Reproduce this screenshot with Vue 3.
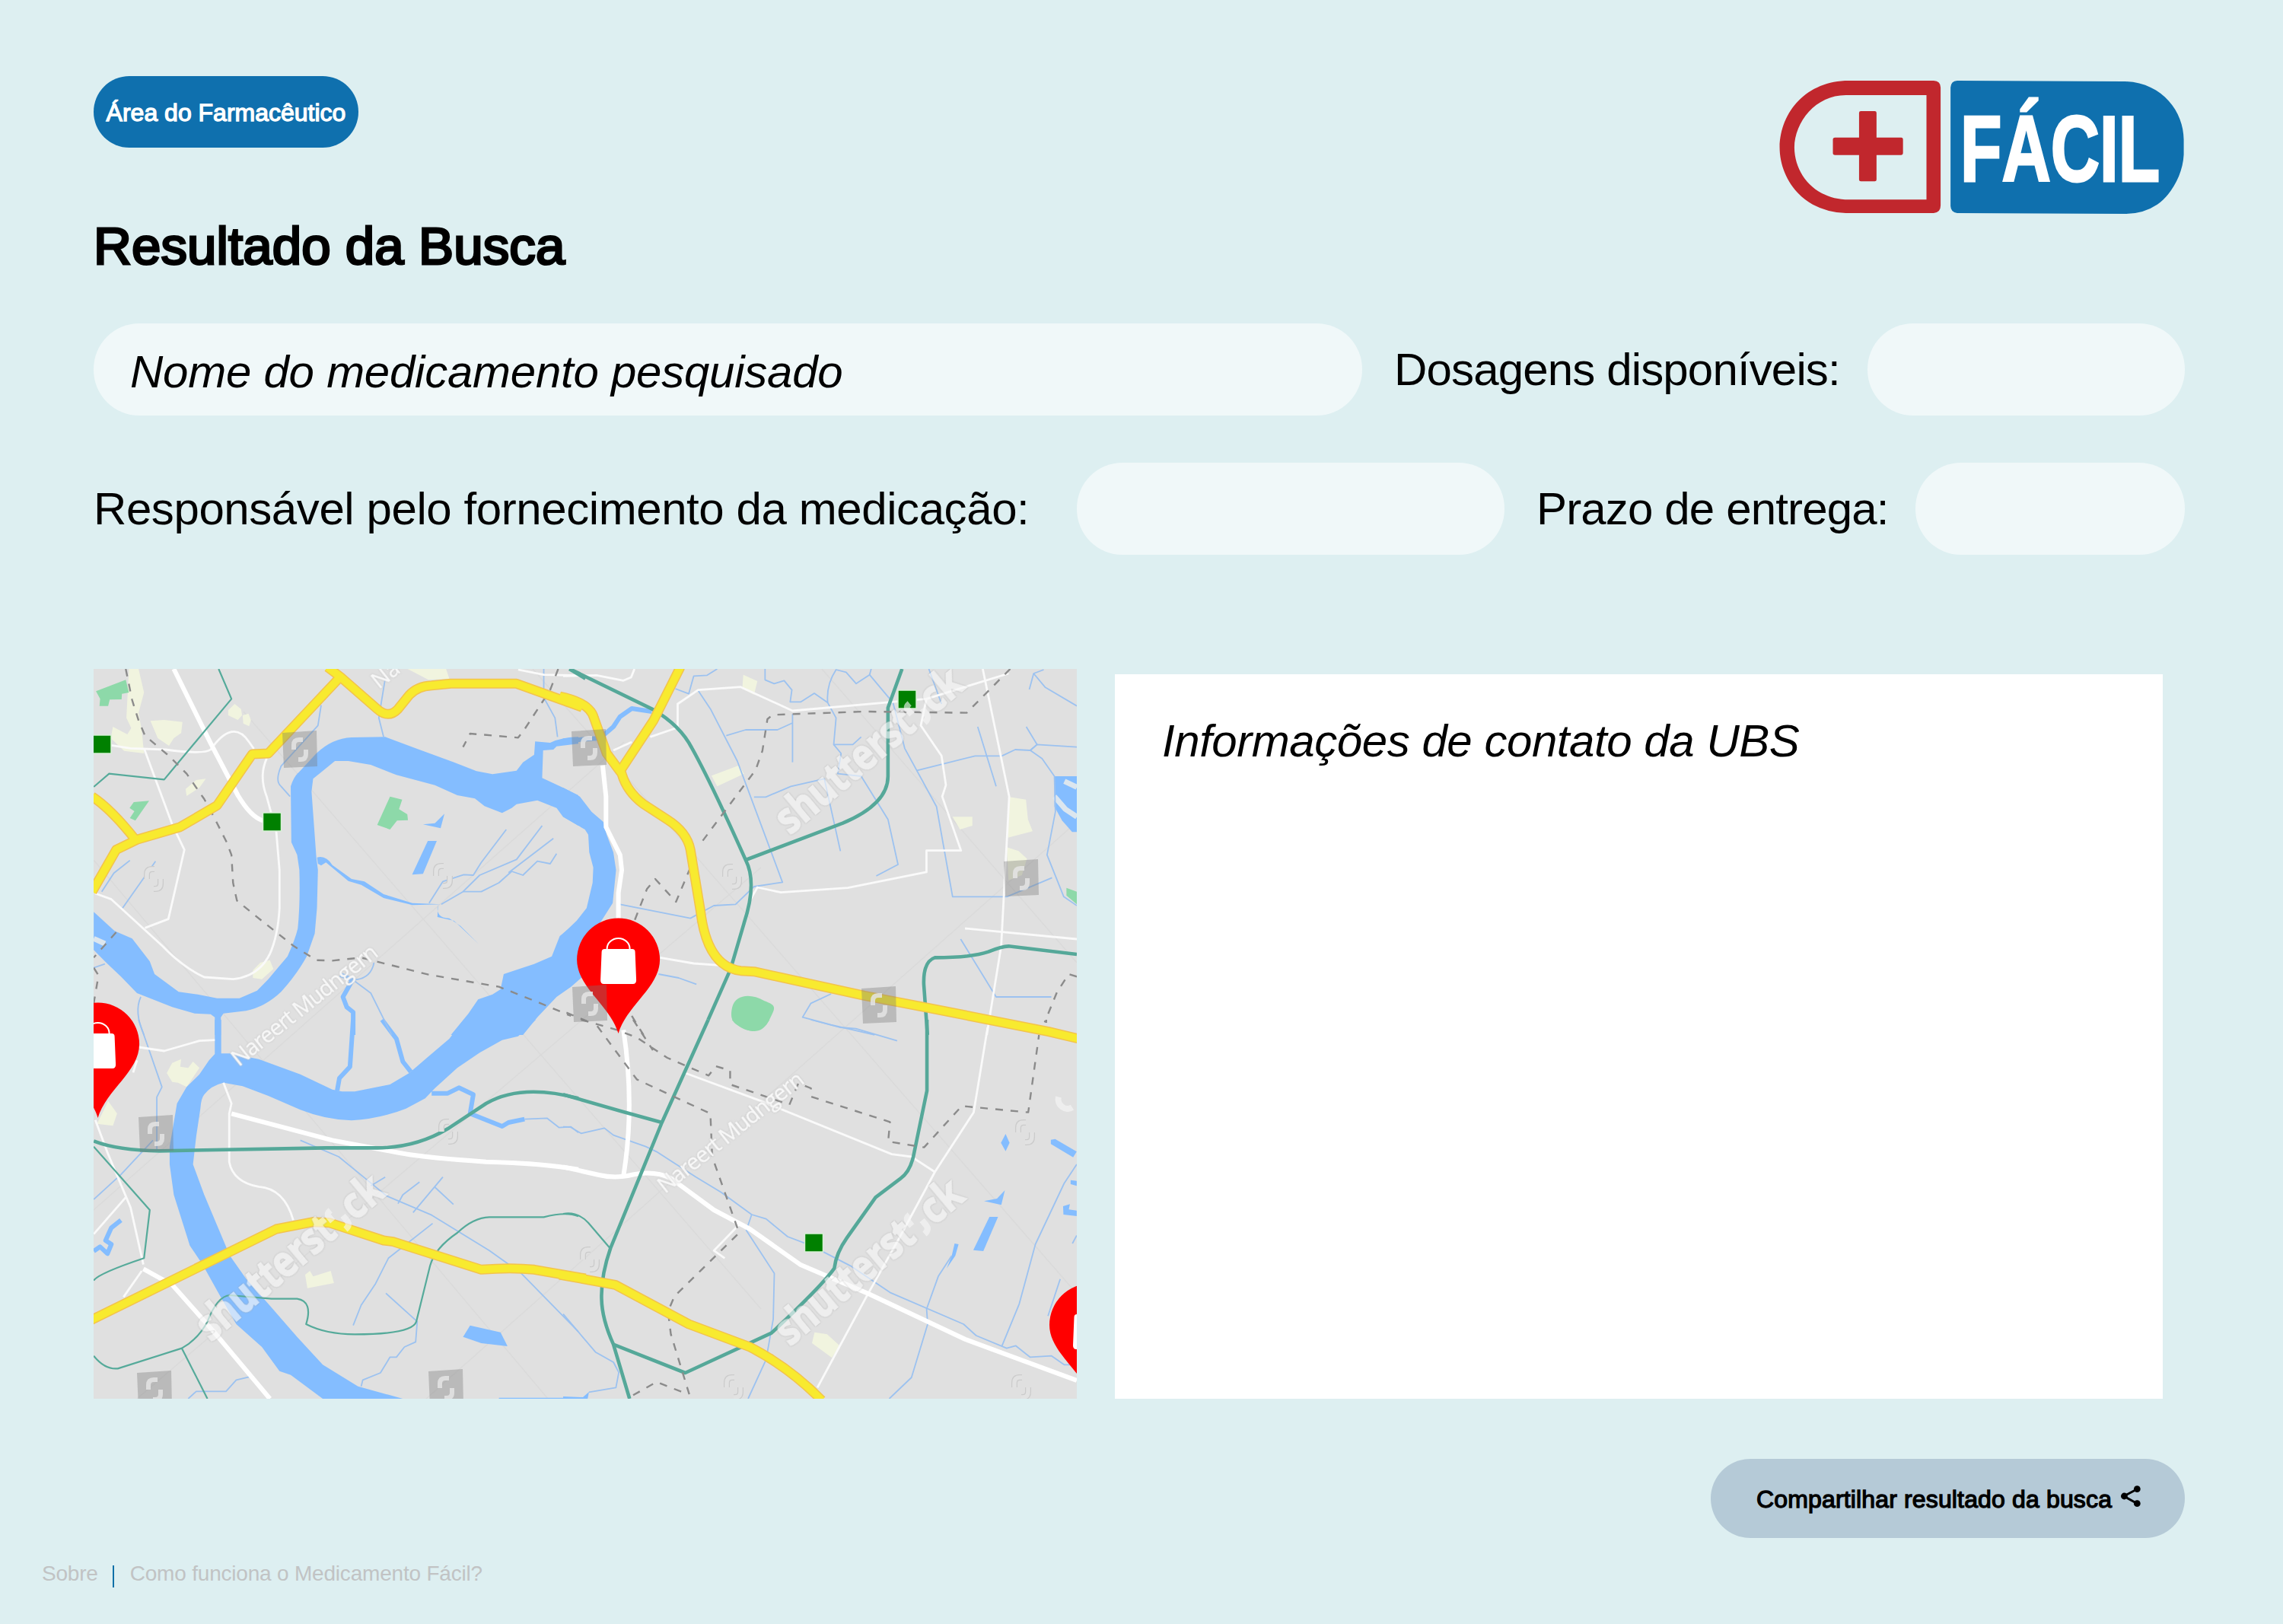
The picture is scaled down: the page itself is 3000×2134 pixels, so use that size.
<script setup>
// The map is drawn in four tiles, each with its own coordinate grid.
const tiles = {
  nw: 'translate(100 860) scale(.42092 .33333)',
  ne: 'translate(740 860) scale(.44005 .33333)',
  sw: 'translate(100 1340) scale(.42092 .33333)',
  se: 'translate(740 1340) scale(.47194 .33333)',
}

// Layers are painted in this order, from the ground up.
const layers = [
  {
    kind: 'sand',
    nw: [
      'M165 57H195L212 150L195 230L205 300L212 390L150 380L108 330L115 285L160 315L172 290L157 250Z',
      'M232 262L275 258L332 266L328 310L305 330L290 360L255 330Z',
      'M475 220L495 195L515 215L518 240L505 258L475 240Z', 'M520 240L538 233L546 258L540 283L522 272Z',
      'M1035 57H1155L1165 95L1100 100Z', 'M342 530L375 495L405 490L385 525L345 558Z',
      'M575 1215L605 1205L616 1240L580 1280L552 1275L552 1245Z',
    ],
    ne: [
      'M538 80L580 105L570 158L535 135Z', 'M443 478L525 437L540 470L460 520Z',
      'M1333 562L1382 572L1388 650L1402 697L1328 722Z', 'M1325 760L1360 775L1385 805L1370 870L1330 890Z',
      'M1163 640H1222V675L1185 690Z',
    ],
    sw: [
      'M283 210L300 170L328 155L325 185L350 190L365 165L385 190L345 265L318 248L300 245Z',
      'M100 320L128 370L115 418L65 410L85 360Z', 'M715 1005L730 990L740 1012L795 990L805 1038L722 1058Z',
    ],
    se: ['M700 1232L735 1240L770 1285L748 1332L693 1275Z'],
  },
  {
    kind: 'park',
    nw: [
      'M62 145L155 100L165 150L143 155L142 177L105 178L100 203H73L75 175Z',
      'M167 605L180 582L228 577L185 655L168 645L182 618Z',
      'M980 560L1018 572L1008 610L1034 630L1036 653L1002 655L980 690L940 672Z',
    ],
    ne: [
      'M505 1390C515 1340 560 1335 600 1365C640 1385 635 1390 612 1450C590 1500 555 1490 520 1460C500 1445 500 1420 505 1390Z',
      'M1503 920L1534 935V985L1503 950Z',
    ],
    se: ['M470 0C500 50 545 65 575 0Z'],
  },
  {
    kind: 'water',
    nw: [
      'M55 1015L120 1090L175 1120L230 1210L245 1260L320 1330L380 1340L440 1355L510 1355L565 1325L600 1280L660 1190Q685 1120 692 1080Q700 980 697 850L690 790L672 740L670 520Q680 480 695 465L750 390Q800 330 860 327L965 325L1060 370L1180 425L1250 460L1300 472L1375 458L1395 425L1430 395L1433 343L1480 348Q1520 325 1568 325V352L1500 362L1490 375L1458 378L1455 487L1520 525L1568 555V675L1520 640L1500 605L1440 575L1375 590L1360 605L1330 625L1275 598L1245 568L1190 555L1120 515L1000 475L920 435L850 420L808 420L740 490L735 540L750 800L755 850L752 1000L745 1100L720 1190Q690 1260 640 1330Q590 1390 530 1405L460 1415L452 1430V1500H433V1430L420 1418L370 1415L300 1390L190 1335L140 1270L90 1210L55 1165Z',
      'M1568 1050L1510 1110L1485 1190L1430 1220L1335 1260L1325 1320L1300 1340L1255 1360L1225 1415L1170 1500H1395L1440 1430L1500 1350L1545 1310L1600 1250V1050Z',
      'M1083 670L1120 665L1150 628L1138 685Z', 'M1098 735H1126L1083 865L1049 868Z',
      'M1130 985Q1120 1040 1165 1040L1200 1070L1258 1143L1180 1050L1128 1035Z',
      'M752 800Q780 790 800 830L860 885L900 895L960 945L1050 980L1140 985L1050 988L960 960L890 908L850 893L780 820L765 832L755 825Z',
    ],
    ne: [
      'M0 525L50 560L85 620L120 660L130 710L150 780L158 850L148 980L100 1080L70 1160L40 1290L0 1330V1100L40 1050L70 1000L88 900L90 840L78 780L75 710L65 690L0 640Z',
      'M1467 480H1534V700H1520L1490 655L1467 600Z',
    ],
    sw: [
      'M433 0V135L415 160L385 215L345 265L315 330L303 420L292 500V570L305 690L345 850L355 890L395 965L450 1090L500 1200L580 1290L635 1385L670 1400L770 1494H1020L880 1445L770 1360L690 1250L600 1120L530 1020L480 930L440 810L400 690L365 570L375 460L388 350Q390 310 400 295Q420 260 460 248L520 262L600 300L700 355Q780 395 860 397Q950 390 1030 350L1090 310L1120 270L1190 190L1260 130L1330 80L1380 65L1435 0H1210L1165 75L1100 145L1040 210L980 255L870 283L830 283L800 275L700 215L570 155L480 133H453V0Z',
      'M1230 1205L1325 1232L1347 1287L1265 1275L1208 1250Z', 'M1320 1490H1568V1496H1320Z',
    ],
    se: [
      'M1232 450L1243 485L1232 518L1219 485Z', 'M1370 470L1430 520L1420 542L1358 490V473Z',
      'M1172 715L1208 705L1230 672L1220 730Z', 'M1187 777H1211L1170 912L1142 908Z',
      'M1090 882L1101 885L1092 930L1068 980L1082 930Z', 'M1413 632L1430 635V655L1413 648Z',
      'M1392 735L1411 727L1408 748L1430 752V774L1393 768Z', 'M0 1485L55 1488L72 1467L68 1496H0Z',
    ],
  },
  { kind: 'glint', ne: ['M1497 500L1534 523', 'M1467 560L1500 610L1534 640'], nw: ['M55 1120L90 1140'] },
  {
    kind: 'canal',
    nw: ['M865 1500V1410L845 1390L833 1350L863 1283L825 1262'],
    ne: ['M0 340L110 330L150 285L170 245L205 213L265 225'],
    sw: ['M865 0L855 185L822 230L815 280', 'M955 0L1000 75L1020 165L1045 205', 'M1110 290L1160 290L1195 268L1240 295L1230 370L1330 420L1350 405L1400 392', 'M140 790L110 820L92 870L110 885L98 922L75 895L55 912'],
  },
  {
    kind: 'stream',
    nw: [
      'M965 95L945 250L960 325', 'M765 200L755 280L640 440Q620 500 640 520L668 560', 'M1460 57V170L1495 250L1503 325',
      'M168 812L118 862L80 935', 'M248 815L145 1000', 'M1343 690L1265 820L1240 870L1210 868L1145 895L1102 980',
      'M1455 675L1375 808L1260 870L1208 935', 'M1490 725L1350 860', 'M1500 785L1480 825L1440 815L1395 870L1360 855L1320 900L1265 935H1208L1140 985',
      'M930 1215Q920 1280 865 1283L920 1335L985 1500', 'M55 1235L90 1220', 'M202 1350Q180 1410 212 1500',
    ],
    ne: [
      'M335 135L375 155L390 85L430 82L460 57', 'M403 142L440 215L520 420L655 898L570 915L515 985L450 990L380 1040L170 985',
      'M487 320L545 297H640L685 270', 'M685 235V425', 'M603 57V100L630 115L660 103L683 140L678 187H710L750 153L790 190L815 250L808 355H865L890 325',
      'M790 190Q785 120 815 60L845 70L875 115L915 80L920 57', 'M915 80L985 190L1020 370L1115 600L1163 955H1325L1460 880',
      'M808 355L830 390L820 470L890 480L970 650L1000 828L935 873', 'M570 562H605L680 520L780 490L828 775', 'M1092 57L1130 195',
      'M1055 458L1230 400H1310L1350 375L1395 378L1415 355L1534 365', 'M1383 285L1415 355L1395 378L1430 410L1467 480L1470 620L1445 790L1495 955L1534 990',
      'M1238 285L1293 520', 'M1435 60L1405 75L1392 138', 'M1405 75L1440 130L1534 203', 'M1187 1122L1293 1350H1458',
      'M800 1338L740 1375L715 1430L800 1460L930 1500', 'M285 1260L345 1275L398 1300',
    ],
    sw: [
      'M195 0L268 265L252 305V520', 'M240 475L140 610L55 708', 'M700 475L820 540L970 695L1110 770L1290 910L1390 1000L1568 1230',
      'M1145 620L1052 760', 'M1120 660L1178 728', 'M1072 640L1020 690L1005 725', 'M965 620L920 655', 'M1113 803L975 940L935 1040L890 1125L865 1205',
      'M967 1078L1065 1190L1060 1270L1025 1290L1000 1330H980L950 1392L895 1420L890 1445', 'M350 1494L375 1465H468L500 1420L540 1408',
      'M1400 392L1470 388L1508 425L1545 422L1568 445',
    ],
    se: [
      'M690 0L770 30L815 35L930 83', 'M0 422L20 423L50 448L115 427L140 455L230 500L260 520L370 620L440 680L525 768L565 785L625 855L690 890L800 970L910 1075L1115 1200L1150 1245L1235 1295L1260 1285L1300 1330L1360 1325L1395 1360H1430',
      'M525 768L510 830L588 1000L585 1180L565 1340L515 1494', 'M1082 930L1045 1010L1012 1140L1015 1200L970 1410L908 1494',
      'M1430 570L1395 645L1315 885L1270 1120L1222 1285', 'M1384 1022L1350 1168', 'M1430 850L1418 882', 'M0 1160L90 1310L140 1350L155 1390L147 1450L72 1468',
    ],
  },
  {
    kind: 'lane',
    nw: [
      'M110 358L170 370L280 375Q400 395 420 375Q490 250 540 345L555 372', 'M212 370L300 670L338 770L288 1043L215 1078',
      'M595 410Q570 480 595 560L625 700L635 850V1000Q630 1110 605 1180Q570 1270 490 1280L400 1272Q330 1230 270 1150L110 965L60 942', 'M1380 60L1460 80L1568 83',
    ],
    ne: [
      'M0 85L100 82L180 103L203 90L213 57', 'M205 345L150 378', 'M260 325L342 288V195L403 140L530 128L685 222L1085 175L1330 75',
      'M1085 175L1068 280L1130 400L1143 515L1132 560L1188 773H1085V858L850 920L650 938L580 918L560 965',
      'M1253 57L1332 560L1308 1150L1265 1500', 'M1200 1080L1534 1122', 'M290 1195L390 1218L500 1228',
    ],
    sw: [
      'M195 108L275 123L385 83L433 80', 'M460 248L485 330L478 370V560Q490 640 570 658Q650 665 678 790', 'M60 395L100 530L170 740L210 965',
      'M155 700L55 845', 'M205 990L148 1093', 'M190 160L178 208',
    ],
    se: ['M340 210L550 320L915 530L970 540L1035 600', 'M1182 30L1143 365L1035 600L940 850L845 1090L708 1450', 'M490 808L420 910L450 940'],
  },
  {
    kind: 'road',
    nw: ['M305 57L420 350L505 555Q545 640 583 655'],
    ne: ['M118 437L128 560V680L170 790L175 850L165 940V1040'],
    sw: ['M485 370L800 475L1010 525Q1100 545 1280 560Q1450 565 1568 590', 'M210 982L300 1045L430 1230L605 1494'],
    se: ['M168 40Q200 340 168 615', 'M0 580L100 612Q140 625 180 615Q250 590 300 625L420 750L520 825L660 965L850 1080L1120 1260L1430 1422'],
  },
  {
    kind: 'rail-thin',
    nw: ['M445 57L485 175L275 493L103 470L55 522'],
    sw: ['M55 500L230 750L212 940Q70 1000 55 1028', 'M55 1325Q90 1380 130 1375L330 1295Q380 1260 410 1190Q440 1090 480 1086L610 1100H690Q740 1110 718 1200Q780 1240 870 1240Q1050 1240 1062 1190L1105 970Q1120 900 1190 840Q1240 780 1290 778H1460Q1530 755 1568 775', 'M330 1295L410 1494'],
    se: ['M0 765Q40 755 70 800L132 903'],
  },
  {
    kind: 'rail',
    nw: ['M1540 57L1590 95'],
    ne: [
      'M20 57L270 218Q350 280 385 370Q440 500 545 810Q580 900 540 1060L500 1240L433 1440', 'M545 810L835 665Q970 590 970 480V210L1012 57',
      'M1534 1182L1330 1150Q1310 1150 1270 1172Q1220 1195 1110 1195Q1075 1210 1077 1300L1088 1500',
    ],
    sw: ['M55 478Q130 515 260 517L780 505H940Q1060 505 1160 430L1280 330Q1390 250 1568 310'],
    se: ['M404 0L275 405L132 900Q105 1010 107 1100Q108 1180 140 1280L185 1494', 'M0 295L160 360L275 405', 'M1013 0V280L975 540Q965 600 940 625L870 700L790 860Q760 920 755 980Q720 1050 580 1235L340 1392L140 1280'],
  },
  {
    kind: 'border',
    nw: [
      'M155 57L175 180L195 260L215 320L290 400L345 470L400 570L430 640L470 740L485 790L490 900L502 970L560 1030L680 1150L750 1205L800 1207L890 1195L1000 1230L1100 1262L1320 1310L1450 1375L1545 1425',
      'M1505 57L1480 140L1400 295L1380 328L1230 312L1208 365', 'M125 1095L55 1195', 'M55 1235L70 1265L55 1375',
    ],
    ne: [
      'M1335 57L1205 230L900 225L625 238L610 255L595 380L575 455L405 755', 'M380 840L337 975L275 885L250 925L213 1050',
      'M1534 1270L1510 1260L1475 1330L1438 1450', 'M10 1412L70 1445', 'M205 1425L240 1500',
    ],
    se: [
      'M50 0L150 40L205 70L290 150L405 220L425 183L465 200V255L630 335L655 250L690 270V303L910 403L905 480L1005 503L1110 340L1295 365L1325 60',
      'M95 25L205 235L410 370L415 540L490 840L400 965L310 1090L292 1150L300 1240L355 1494', 'M195 0L250 120', 'M195 1480L260 1428L345 1475', 'M1345 0V12',
    ],
  },
  ...['highway-edge', 'highway'].map((kind) => ({
    kind,
    nw: [
      'M785 50L825 88L940 215Q975 255 1005 215L1040 160Q1065 125 1110 122L1170 115H1375L1580 208', 'M825 88L600 390L550 393L440 595L325 680L190 730L125 770L50 935',
      'M50 560Q110 610 185 730',
    ],
    ne: ['M-10 165Q80 190 92 250L130 390L175 470Q190 540 240 590L310 650Q370 700 380 770L410 1010Q430 1230 530 1247L570 1250L900 1345L1090 1393L1450 1487L1550 1518', 'M350 50L270 260L170 460'],
    sw: ['M45 1185L625 825L740 797L790 800L960 870L990 875L1265 985Q1360 975 1430 985L1590 1020'],
    se: ['M-10 1005L145 1045L350 1200L520 1290Q630 1370 720 1500'],
  })),
]

const layerShapes = (layer) =>
  Object.keys(tiles).flatMap((tile) => (layer[tile] || []).map((d) => ({ d, transform: tiles[tile] })))

const stations = [[122, 966], [345.5, 1068], [1180, 907], [1057.5, 1621]]
const pins = [[812.6, 1358], [128.6, 1469], [1433.5, 1838]]
const badges = [[394, 985], [774, 983], [1342, 1154], [1155, 1321], [775, 1319], [205, 1490], [203, 1826], [586, 1824]]
const ghosts = [[202, 1155], [582, 1151], [962, 1152], [589, 1487], [775, 1655], [964, 1823], [1342, 1823], [1347, 1488]]
const brands = [[1038, 1098], [277, 1764], [1038, 1770]]
const authors = [[314, 1402], [874, 1569]]
const folds = ['M320 935L1000 1720', 'M123 1590L820 975', 'M123 1130L720 1838', 'M700 879L1415 1700', 'M560 1838L1415 1080', 'M1080 879L1415 1265', 'M180 1838L1000 1140']
</script>

<template>
  <main class="page">
    <header class="header">
      <div>
        <button class="area">Área do Farmacêutico</button>
        <h1>Resultado da Busca</h1>
      </div>
      <svg class="logo" viewBox="2336 100 536 186" role="img" aria-label="+ Fácil">
        <g transform="translate(2300 80) scale(.39541 .33333)">
          <path class="red" fill-rule="evenodd" d="M330 78H612Q635 80 635 105V570Q635 598 612 600H320Q260 598 210 566C140 520 100 430 100 340C102 200 190 78 330 78ZM320 135C220 135 150 240 149 342C150 450 220 547 330 547H588V135Z" />
          <path class="red" d="M370 198H416Q422 198 422 205V302H504Q510 302 510 310V364Q510 371 504 371H422V468Q422 475 416 475H370Q364 475 364 468V371H284Q277 371 277 364V310Q277 302 284 302H364V205Q364 198 370 198Z" />
          <path class="blue" d="M690 78L1240 81C1370 81 1443 200 1443 310V370C1440 450 1400 530 1355 566Q1310 602 1250 603L690 600Q669 597 668 572V105Q669 80 690 78Z" />
        </g>
        <text class="brand" transform="translate(2577 237.500) scale(.73 1)">FÁCIL</text>
      </svg>
    </header>

    <section class="row">
      <div class="field name"><em>Nome do medicamento pesquisado</em></div>
      <span class="label dosage">Dosagens disponíveis:</span>
      <div class="field grow"></div>
    </section>
    <section class="row second">
      <span class="label supplier">Responsável pelo fornecimento da medicação:</span>
      <div class="field provider"></div>
      <span class="label term">Prazo de entrega:</span>
      <div class="field grow"></div>
    </section>

    <section class="results">
      <svg class="map" viewBox="123 879 1292 959">
        <g class="fold"><path v-for="d in folds" :key="d" :d="d" /></g>
        <g v-for="layer in layers" :key="layer.kind" :class="layer.kind">
          <path v-for="(shape, i) in layerShapes(layer)" :key="i" :d="shape.d" :transform="shape.transform" />
        </g>
        <rect v-for="([x, y], i) in stations" :key="'s' + i" class="station" :x="x" :y="y" width="24" height="24" />
        <g v-for="([x, y], i) in pins" :key="'p' + i" :transform="`translate(${x} ${y})`">
          <path class="pin" d="M0 0C-11 -37 -54.5 -61 -54.5 -97A54.5 54.5 0 0 1 54.5 -97C54.5 -61 11 -37 0 0Z" />
          <path class="handle" d="M-15 -109V-111A15 14 0 0 1 15 -111V-109" />
          <path class="bag" d="M-18 -111H18Q22 -111 22 -107L23.500 -70Q23.500 -65 19 -65H-19Q-23.500 -65 -23.500 -70L-22 -107Q-22 -111 -18 -111Z" />
        </g>
        <g v-for="([x, y], i) in badges" :key="'b' + i" :transform="`translate(${x} ${y})`">
          <path class="badge" d="M-23 -22L22 -25L23 22L-21 24Z" />
          <path class="hook" d="M-8 0V-6Q-8 -13 -1 -13H4M8 0V6Q8 13 1 13H-2" />
        </g>
        <g v-for="([x, y], i) in ghosts" :key="'g' + i" class="ghost" :transform="`translate(${x} ${y})`">
          <path class="edge" d="M-9 0V-6Q-9 -13 -2 -13H1M9 0V6Q9 13 2 13H0" />
          <path class="fill" d="M-9 0V-6Q-9 -13 -2 -13H1M9 0V6Q9 13 2 13H0" />
        </g>
        <g v-for="([x, y], i) in brands" :key="'w' + i" class="stock" :transform="`translate(${x} ${y}) rotate(-40)`">
          <text textLength="220" lengthAdjust="spacingAndGlyphs">shutterst</text>
          <path d="M225 -19V-27Q225 -32 232 -32M240 -16V-8Q240 0 231 0" />
          <text x="247" textLength="56" lengthAdjust="spacingAndGlyphs">ck</text>
        </g>
        <text v-for="([x, y], i) in authors" :key="'a' + i" class="author" :transform="`translate(${x} ${y}) rotate(-38.500)`" textLength="236">Nareert Mudngern</text>
        <text class="author" transform="translate(498 906) rotate(-38.500)">Na</text>
        <g class="stock" transform="translate(1415 1450) rotate(-40)"><path d="M-13 -22A11 12 0 0 0 -8 0" /></g>
      </svg>
      <article class="contact"><em>Informações de contato da UBS</em></article>
    </section>

    <button class="share">
      <span>Compartilhar resultado da busca</span>
      <svg viewBox="0 0 26 30" width="26" height="30">
        <path d="M21.300 5.700L4 15L21.300 24.700" />
        <circle cx="21.300" cy="5.700" r="4.400" /><circle cx="4.400" cy="15" r="4.400" /><circle cx="21.300" cy="24.700" r="4.400" />
      </svg>
    </button>

    <footer class="footer">
      <span>Sobre</span><i class="divider"></i><span>Como funciona o Medicamento Fácil?</span>
    </footer>
  </main>
</template>

<style>
body { margin: 0; background: #ddeff1; }
</style>

<style scoped>
.page { box-sizing: border-box; display: flex; flex-direction: column; width: 3000px; height: 2134px; padding: 100px 129px 0 123px; overflow: hidden; background: #ddeff1; color: #000; font-family: "Liberation Sans", Arial, sans-serif; font-size: 60px; }
button { border: 0; font-family: inherit; font-weight: 400; font-size: 32px; white-space: nowrap; -webkit-text-stroke: 1.3px currentColor; }
.header { display: flex; justify-content: space-between; align-items: flex-start; height: 325px; }
.header > div { display: flex; flex-direction: column; align-items: flex-start; }
.area { box-sizing: border-box; width: 348px; height: 94px; padding: 3px 0 0; border-radius: 48px; background: #0f70ae; color: #fff; }
h1 { margin: 90px 0 0; font-size: 69px; font-weight: 400; line-height: 80px; letter-spacing: .1px; white-space: nowrap; -webkit-text-stroke: 3px currentColor; }
.logo { width: 536px; height: 186px; }
.red { fill: #c1272d; }
.blue { fill: #0f70ae; }
.brand { fill: #fff; stroke: #fff; stroke-width: 3px; font-size: 122px; font-weight: 700; }
.row { display: flex; height: 121px; line-height: 121px; white-space: nowrap; }
.second { margin-top: 62px; }
.field { box-sizing: border-box; height: 121px; border-radius: 60px; background: #f0f8f9; }
.name { width: 1667px; padding: 3px 0 0 48px; letter-spacing: -.25px; }
.label { box-sizing: border-box; flex: none; }
.dosage { width: 664px; padding-left: 42px; letter-spacing: -.85px; }
.supplier { width: 1292px; letter-spacing: -.42px; }
.provider { width: 562px; }
.term { width: 540px; padding-left: 42px; letter-spacing: -.85px; }
.grow { flex: 1; }
.results { display: flex; gap: 50px; height: 959px; margin-top: 150px; }
.map { flex: none; width: 1292px; height: 959px; background: #e0e0e0; }
.contact { box-sizing: border-box; width: 1377px; margin-top: 7px; padding: 52px 0 0 62px; background: #fff; line-height: 72px; letter-spacing: -.45px; white-space: nowrap; }
.share { box-sizing: border-box; align-self: flex-end; display: flex; align-items: center; gap: 12px; width: 623px; height: 104px; margin-top: 79px; padding: 3px 0 0 60px; border-radius: 52px; background: #b5cad7; color: #000; letter-spacing: .15px; }
.share svg { margin-top: -10px; }
.share path { fill: none; stroke: #000; stroke-width: 3px; }
.footer { display: flex; align-items: center; height: 32px; margin: 31px 0 0 -68px; color: #c1c3c4; font-size: 28px; line-height: 32px; letter-spacing: -.2px; }
.divider { width: 2px; height: 29px; margin: 6px 21px 0 19px; background: #1070a8; }

.map path { fill: none; vector-effect: non-scaling-stroke; stroke-linejoin: round; }
.fold path { stroke: #dadada; stroke-width: 1.500px; }
.map .sand path { fill: #f1f4df; }
.map .park path { fill: #8dd9a9; }
.map .water path { fill: #84bdff; }
.glint path { stroke: #dce6ee; stroke-width: 7px; }
.canal path { stroke: #84bdff; stroke-width: 6px; }
.stream path { stroke: #9cc2f0; stroke-width: 1.800px; }
.lane path { stroke: #fafafa; stroke-width: 2.800px; }
.road path { stroke: #fff; stroke-width: 6px; }
.rail-thin path { stroke: #55aa9a; stroke-width: 2.200px; }
.rail path { stroke: #55a899; stroke-width: 4.600px; }
.border path { stroke: #8b8b8b; stroke-width: 2.400px; stroke-dasharray: 10px 10px; }
.highway-edge path { stroke: #f3c34c; stroke-width: 13px; }
.highway path { stroke: #f8ea2f; stroke-width: 10px; }
.station { fill: #008000; stroke: #d8f0d6; stroke-width: 1.500px; }
.map .pin { fill: #f00; }
.map .bag { fill: #fff; }
.handle { stroke: #fff; stroke-width: 2px; }
.map .badge { fill: #777; fill-opacity: .36; }
.hook { stroke: #e4e4e4; stroke-width: 6px; stroke-opacity: .85; }
.ghost .edge { stroke: #cbcbcb; stroke-width: 8px; }
.ghost .fill { stroke: #e2e2e2; stroke-width: 5.500px; }
.stock { opacity: .62; }
.stock text { fill: #f8f8f8; stroke: #f8f8f8; stroke-width: 2px; font-family: "Open Sans", sans-serif; font-size: 57px; font-weight: 700; filter: drop-shadow(0 0 1px #999); }
.stock path { stroke: #f8f8f8; stroke-width: 8px; }
.author { fill: #f8f8f8; stroke: #f8f8f8; stroke-width: .5px; font-family: "Open Sans", sans-serif; font-size: 29px; filter: drop-shadow(0 0 1px #bbb); }
</style>
